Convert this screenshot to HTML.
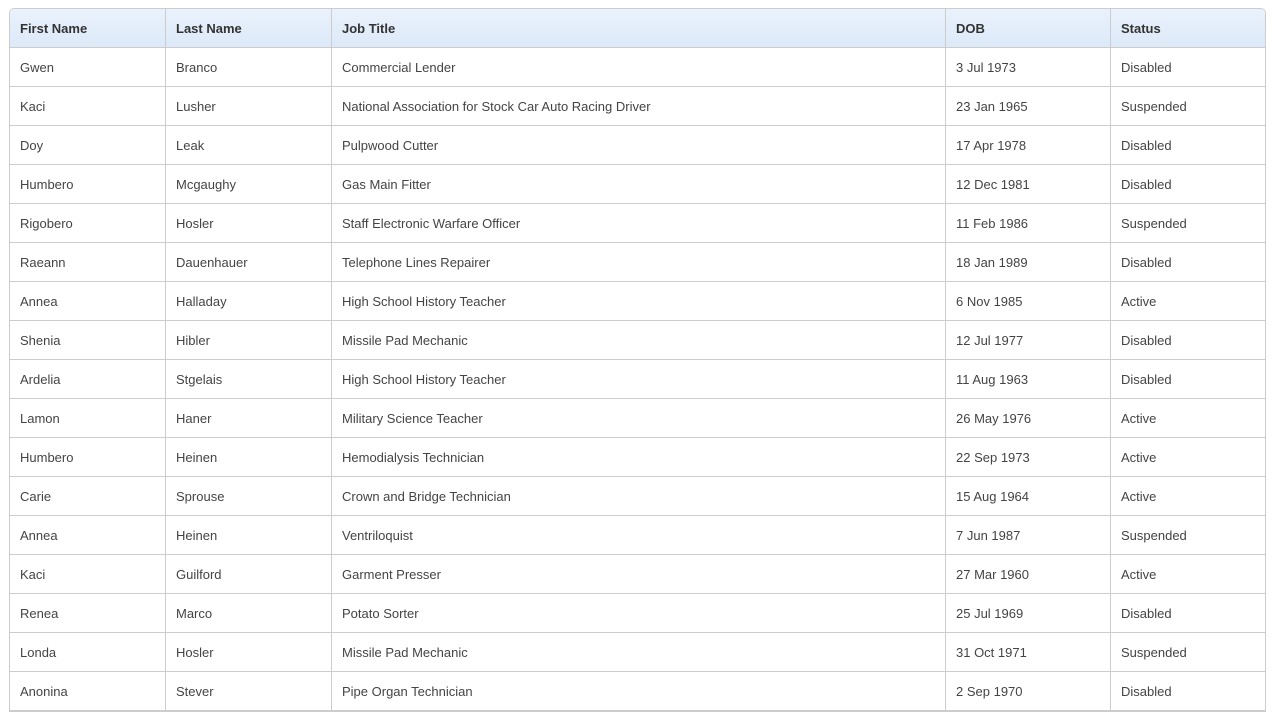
<!DOCTYPE html>
<html><head><meta charset="utf-8"><style>
body{margin:0;background:#fff;width:1274px;height:694px;overflow:hidden;font-family:"Liberation Sans",sans-serif;font-size:13px;color:#444}
.t{position:absolute;left:9px;top:8px;width:1255px;border:1px solid #ccc;border-radius:5px 5px 0 0;overflow:hidden}
.r{display:flex;height:38px;border-bottom:1px solid #ccc}
.r div{box-sizing:border-box;padding-left:10px;padding-top:1px;line-height:38px;border-right:1px solid #ccc;white-space:nowrap;overflow:hidden}
.r div:last-child{border-right:none}
.c1{width:156px}.c2{width:166px}.c3{width:614px}.c4{width:165px}.c5{flex:1}
.h{background:linear-gradient(#eaf2fc,#dce9f8);font-weight:bold;color:#333}
</style></head><body>
<div class="t">
<div class="r h"><div class="c1">First Name</div><div class="c2">Last Name</div><div class="c3">Job Title</div><div class="c4">DOB</div><div class="c5">Status</div></div>
<div class="r"><div class="c1">Gwen</div><div class="c2">Branco</div><div class="c3">Commercial Lender</div><div class="c4">3 Jul 1973</div><div class="c5">Disabled</div></div>
<div class="r"><div class="c1">Kaci</div><div class="c2">Lusher</div><div class="c3">National Association for Stock Car Auto Racing Driver</div><div class="c4">23 Jan 1965</div><div class="c5">Suspended</div></div>
<div class="r"><div class="c1">Doy</div><div class="c2">Leak</div><div class="c3">Pulpwood Cutter</div><div class="c4">17 Apr 1978</div><div class="c5">Disabled</div></div>
<div class="r"><div class="c1">Humbero</div><div class="c2">Mcgaughy</div><div class="c3">Gas Main Fitter</div><div class="c4">12 Dec 1981</div><div class="c5">Disabled</div></div>
<div class="r"><div class="c1">Rigobero</div><div class="c2">Hosler</div><div class="c3">Staff Electronic Warfare Officer</div><div class="c4">11 Feb 1986</div><div class="c5">Suspended</div></div>
<div class="r"><div class="c1">Raeann</div><div class="c2">Dauenhauer</div><div class="c3">Telephone Lines Repairer</div><div class="c4">18 Jan 1989</div><div class="c5">Disabled</div></div>
<div class="r"><div class="c1">Annea</div><div class="c2">Halladay</div><div class="c3">High School History Teacher</div><div class="c4">6 Nov 1985</div><div class="c5">Active</div></div>
<div class="r"><div class="c1">Shenia</div><div class="c2">Hibler</div><div class="c3">Missile Pad Mechanic</div><div class="c4">12 Jul 1977</div><div class="c5">Disabled</div></div>
<div class="r"><div class="c1">Ardelia</div><div class="c2">Stgelais</div><div class="c3">High School History Teacher</div><div class="c4">11 Aug 1963</div><div class="c5">Disabled</div></div>
<div class="r"><div class="c1">Lamon</div><div class="c2">Haner</div><div class="c3">Military Science Teacher</div><div class="c4">26 May 1976</div><div class="c5">Active</div></div>
<div class="r"><div class="c1">Humbero</div><div class="c2">Heinen</div><div class="c3">Hemodialysis Technician</div><div class="c4">22 Sep 1973</div><div class="c5">Active</div></div>
<div class="r"><div class="c1">Carie</div><div class="c2">Sprouse</div><div class="c3">Crown and Bridge Technician</div><div class="c4">15 Aug 1964</div><div class="c5">Active</div></div>
<div class="r"><div class="c1">Annea</div><div class="c2">Heinen</div><div class="c3">Ventriloquist</div><div class="c4">7 Jun 1987</div><div class="c5">Suspended</div></div>
<div class="r"><div class="c1">Kaci</div><div class="c2">Guilford</div><div class="c3">Garment Presser</div><div class="c4">27 Mar 1960</div><div class="c5">Active</div></div>
<div class="r"><div class="c1">Renea</div><div class="c2">Marco</div><div class="c3">Potato Sorter</div><div class="c4">25 Jul 1969</div><div class="c5">Disabled</div></div>
<div class="r"><div class="c1">Londa</div><div class="c2">Hosler</div><div class="c3">Missile Pad Mechanic</div><div class="c4">31 Oct 1971</div><div class="c5">Suspended</div></div>
<div class="r"><div class="c1">Anonina</div><div class="c2">Stever</div><div class="c3">Pipe Organ Technician</div><div class="c4">2 Sep 1970</div><div class="c5">Disabled</div></div>
</div>
</body></html>
